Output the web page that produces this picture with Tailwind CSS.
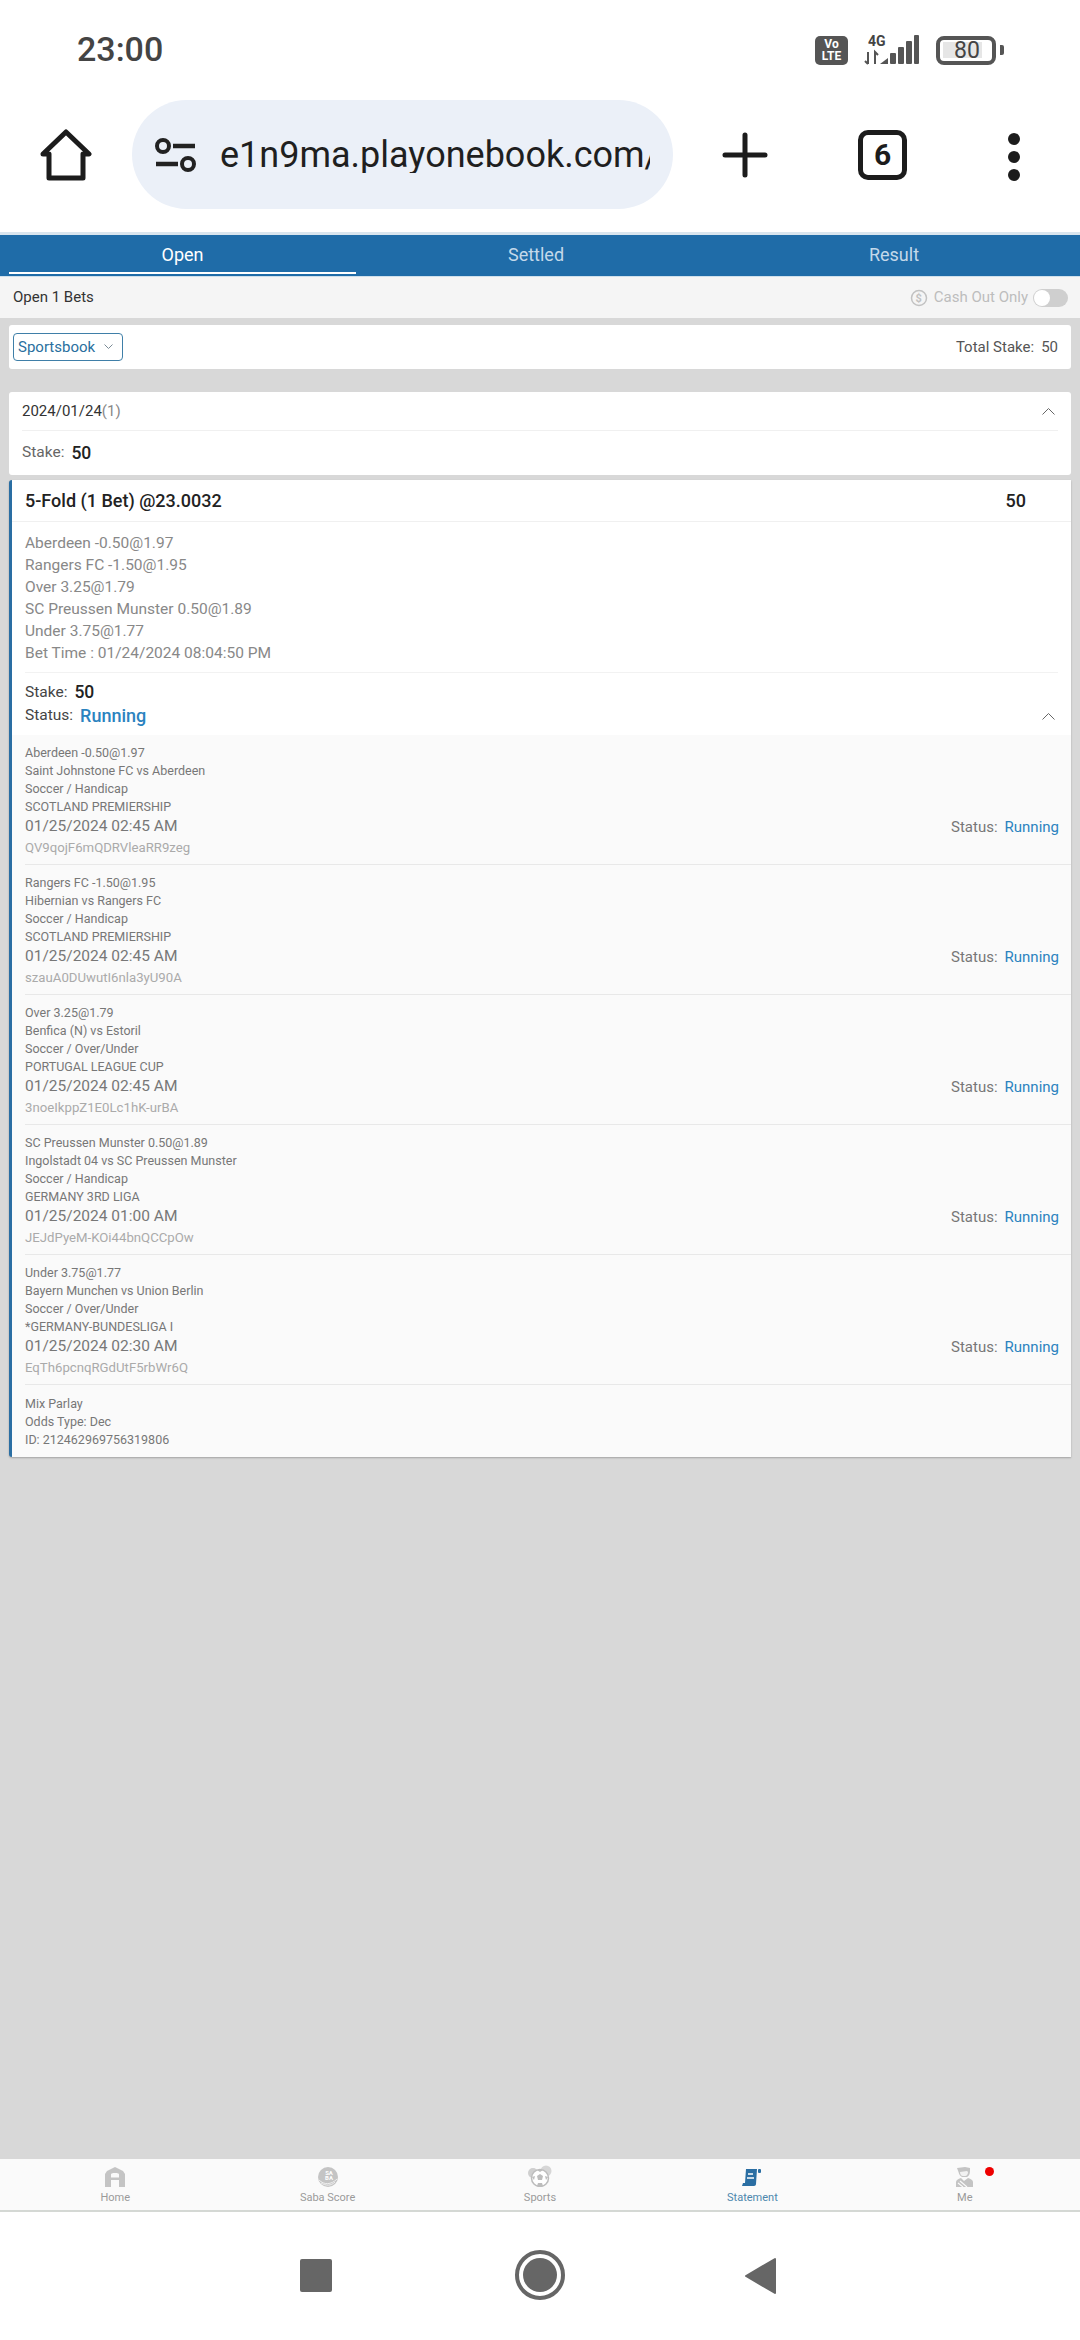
<!DOCTYPE html>
<html lang="en">
<head>
  <meta charset="UTF-8" />
  <meta name="viewport" content="width=device-width, initial-scale=1" />
  <title>Statement</title>
  <script src="https://cdn.jsdelivr.net/npm/@tailwindcss/browser@4"></script>
</head>
<body class="w-[1080px] h-[2340px] overflow-hidden bg-white font-['Roboto',sans-serif] flex flex-col">

  <!-- Android status bar -->
  <div class="h-[100px] shrink-0 flex items-center justify-between pl-[77px] pr-[76px]">
    <span class="text-[34px] leading-none font-medium text-[#444] pb-[3px]">23:00</span>
    <div class="flex items-center gap-[14px]">
      <div class="w-[33px] h-[29px] rounded-[5px] bg-[#555] text-white text-[12px] leading-[12px] font-bold text-center flex flex-col justify-center"><span>Vo</span><span>LTE</span></div>
      <svg width="58" height="30" viewBox="0 0 58 30" fill="#555">
        <text x="6" y="11" font-family="Roboto" font-size="14" font-weight="700" fill="#444">4G</text>
        <path d="M6 17v12M3 26l3 3M13 29V17l3 3" stroke="#555" stroke-width="2" fill="none"/>
        <path d="M18 29l8-6v6z"/><rect x="28" y="18" width="6" height="11" rx="1"/><rect x="36" y="12" width="6" height="17" rx="1"/><rect x="44" y="6" width="6" height="23" rx="1"/><rect x="52" y="0" width="5" height="29" rx="1"/>
      </svg>
      <div class="flex items-center gap-[4px] ml-[2px]">
        <div class="w-[60px] h-[29px] rounded-[8px] border-[4px] border-[#555] flex items-center px-[3px]">
          <div class="w-[39px] h-[16px] bg-[#e6e6e6] flex items-center justify-center pl-[9px] text-[23px] leading-none text-[#444]">80</div>
        </div>
        <div class="w-[4px] h-[10px] rounded-r-[2px] bg-[#555]"></div>
      </div>
    </div>
  </div>

  <!-- Browser toolbar -->
  <div class="h-[132px] shrink-0 flex items-start relative">
    <svg class="mt-[29px] ml-[40px] shrink-0" width="52" height="52" viewBox="0 0 52 52" fill="none" stroke="#1c1c1c" stroke-width="5" stroke-linejoin="round" stroke-linecap="round">
      <path d="M3 25L26 3l23 22h-6v24H9V25z"/>
    </svg>
    <div class="ml-[40px] w-[541px] h-[109px] rounded-[55px] bg-[#ebf0f8] flex items-center pl-[23px] pr-[23px] shrink-0">
      <svg class="shrink-0" width="42" height="34" viewBox="0 0 42 34" fill="none" stroke="#222" stroke-width="4">
        <circle cx="8" cy="8" r="6"/><path d="M18 8h22M1 26h22" stroke-width="4.5"/><circle cx="33" cy="26" r="6"/>
      </svg>
      <div class="ml-[23px] flex-1 overflow-hidden whitespace-nowrap text-[36px] leading-none text-[#1f1f1f]">e1n9ma.playonebook.com/</div>
    </div>
    <svg class="absolute left-[722px] top-[32px]" width="46" height="46" viewBox="0 0 46 46" stroke="#1c1c1c" stroke-width="5" stroke-linecap="round"><path d="M23 3v40M3 23h40"/></svg>
    <div class="absolute left-[858px] top-[30px] w-[49px] h-[50px] rounded-[10px] border-[5px] border-[#1c1c1c] flex items-center justify-center text-[30px] leading-none font-bold text-[#1c1c1c]">6</div>
    <div class="absolute left-[1008px] top-[33px] flex flex-col gap-[6px]">
      <span class="w-[12px] h-[12px] rounded-full bg-[#1c1c1c]"></span><span class="w-[12px] h-[12px] rounded-full bg-[#1c1c1c]"></span><span class="w-[12px] h-[12px] rounded-full bg-[#1c1c1c]"></span>
    </div>
  </div>
  <div class="h-[3px] shrink-0 bg-[#d9e5ee]"></div>

  <!-- Page -->
  <main class="flex-1 bg-[#d8d8d8] flex flex-col min-h-0">
    <div class="h-[42px] shrink-0 bg-[#1f6ca8] grid grid-cols-[347px_360px_356px] pl-[9px] text-[18px] border-b border-[#cfe0ec]">
      <div class="relative text-white flex items-center justify-center pb-[3px]">Open<span class="absolute left-0 right-0 bottom-[2px] h-[2px] bg-white"></span></div>
      <div class="text-[#c4d9ea] flex items-center justify-center pb-[3px]">Settled</div>
      <div class="text-[#c4d9ea] flex items-center justify-center pb-[3px]">Result</div>
    </div>

    <div class="h-[41px] shrink-0 bg-[#f5f5f5] flex items-center justify-between pl-[13px] pr-[12px] text-[15px] text-[#333]">
      <span>Open 1 Bets</span>
      <div class="flex items-center text-[#bdbdbd]">
        <svg class="mr-[6px]" width="18" height="20" viewBox="0 0 18 20" fill="none" stroke="#c2c2c2" stroke-width="1.5"><circle cx="9" cy="10" r="7.5"/><text x="5.5" y="14" font-family="Roboto" font-size="11" font-weight="700" fill="#c2c2c2" stroke="none">$</text></svg>
        <span>Cash Out Only</span>
        <div class="ml-[5px] w-[35px] h-[18px] rounded-full bg-[#cfcfcf] relative"><span class="absolute left-[1px] top-[1px] w-[16px] h-[16px] rounded-full bg-white"></span></div>
      </div>
    </div>

    <div class="mt-[7px] mx-[9px] h-[44px] shrink-0 bg-white rounded-[3px] flex items-center justify-between pl-[4px] pr-[13px] text-[15px]">
      <div class="w-[110px] h-[28px] rounded-[4px] border border-[#3f7fa8] text-[#2a6f9e] flex items-center pl-[4px] gap-[9px]">
        <span>Sportsbook</span>
        <svg width="9" height="6" viewBox="0 0 9 6" fill="none" stroke="#7a8a95"><path d="M.5.5l4 4 4-4"/></svg>
      </div>
      <div class="text-[#555]">Total Stake:<span class="ml-[7px]">50</span></div>
    </div>

    <div class="mt-[23px] mx-[9px] h-[83px] shrink-0 bg-white rounded-[3px] px-[13px]">
      <div class="h-[39px] border-b border-[#f0f0f0] flex items-center justify-between text-[15px] text-[#333]">
        <span>2024/01/24<span class="text-[#888]">(1)</span></span>
        <svg class="mr-[3px]" width="13" height="8" viewBox="0 0 13 8" fill="none" stroke="#666"><path d="M.5 7.5l6-6 6 6"/></svg>
      </div>
      <div class="h-[44px] flex items-center text-[15.5px] text-[#666]">Stake:<span class="ml-[7px] text-[17.5px] font-medium text-[#222]">50</span></div>
    </div>

    <!-- Bet card -->
    <section class="mt-[5px] mx-[9px] h-[977px] shrink-0 bg-white rounded-l-[3px] border-l-[3px] border-[#2a6ea3] shadow-[0_1px_2px_rgba(0,0,0,0.25)] flex flex-col">
      <div class="h-[42px] shrink-0 flex items-center justify-between pl-[13px] pr-[45px] border-b border-[#f0f0f0] text-[18px] font-medium text-[#222]">
        <span>5-Fold (1 Bet) @23.0032</span><span>50</span>
      </div>
      <div class="mx-[13px] h-[151px] shrink-0 pt-[10px] text-[15.5px] leading-[22px] text-[#888] border-b border-[#f2f2f2]">
        <p>Aberdeen -0.50@1.97</p>
        <p>Rangers FC -1.50@1.95</p>
        <p>Over 3.25@1.79</p>
        <p>SC Preussen Munster 0.50@1.89</p>
        <p>Under 3.75@1.77</p>
        <p>Bet Time : 01/24/2024 08:04:50 PM</p>
      </div>
      <div class="h-[62px] shrink-0 pl-[13px] pr-[13px] pt-[8px] text-[15.5px] text-[#444]">
        <div class="h-[23px] flex items-center">Stake:<span class="ml-[7px] text-[17.5px] font-medium text-[#222]">50</span></div>
        <div class="h-[23px] flex items-center justify-between">
          <div class="flex items-center">Status:<span class="ml-[7px] text-[18px] font-medium text-[#2b83bf]">Running</span></div>
          <svg class="mr-[3px]" width="13" height="8" viewBox="0 0 13 8" fill="none" stroke="#666"><path d="M.5 7.5l6-6 6 6"/></svg>
        </div>
      </div>

      <div class="flex-1 bg-[#fafafa] pl-[13px]">
        <article class="h-[130px] pt-[9px] border-b border-[#e8e8e8]">
          <div class="text-[12.5px] leading-[18px] text-[#777]"><p>Aberdeen -0.50@1.97</p><p>Saint Johnstone FC vs Aberdeen</p><p>Soccer / Handicap</p><p>SCOTLAND PREMIERSHIP</p></div>
          <div class="flex items-center justify-between pr-[12px] h-[22px] text-[15.5px] text-[#777]"><span>01/25/2024 02:45 AM</span><span class="text-[15px]">Status:<span class="ml-[7px] text-[#2b83bf]">Running</span></span></div>
          <p class="text-[13.2px] leading-[20px] text-[#aaa]">QV9qojF6mQDRVleaRR9zeg</p>
        </article>
        <article class="h-[130px] pt-[9px] border-b border-[#e8e8e8]">
          <div class="text-[12.5px] leading-[18px] text-[#777]"><p>Rangers FC -1.50@1.95</p><p>Hibernian vs Rangers FC</p><p>Soccer / Handicap</p><p>SCOTLAND PREMIERSHIP</p></div>
          <div class="flex items-center justify-between pr-[12px] h-[22px] text-[15.5px] text-[#777]"><span>01/25/2024 02:45 AM</span><span class="text-[15px]">Status:<span class="ml-[7px] text-[#2b83bf]">Running</span></span></div>
          <p class="text-[13.2px] leading-[20px] text-[#aaa]">szauA0DUwutI6nla3yU90A</p>
        </article>
        <article class="h-[130px] pt-[9px] border-b border-[#e8e8e8]">
          <div class="text-[12.5px] leading-[18px] text-[#777]"><p>Over 3.25@1.79</p><p>Benfica (N) vs Estoril</p><p>Soccer / Over/Under</p><p>PORTUGAL LEAGUE CUP</p></div>
          <div class="flex items-center justify-between pr-[12px] h-[22px] text-[15.5px] text-[#777]"><span>01/25/2024 02:45 AM</span><span class="text-[15px]">Status:<span class="ml-[7px] text-[#2b83bf]">Running</span></span></div>
          <p class="text-[13.2px] leading-[20px] text-[#aaa]">3noeIkppZ1E0Lc1hK-urBA</p>
        </article>
        <article class="h-[130px] pt-[9px] border-b border-[#e8e8e8]">
          <div class="text-[12.5px] leading-[18px] text-[#777]"><p>SC Preussen Munster 0.50@1.89</p><p>Ingolstadt 04 vs SC Preussen Munster</p><p>Soccer / Handicap</p><p>GERMANY 3RD LIGA</p></div>
          <div class="flex items-center justify-between pr-[12px] h-[22px] text-[15.5px] text-[#777]"><span>01/25/2024 01:00 AM</span><span class="text-[15px]">Status:<span class="ml-[7px] text-[#2b83bf]">Running</span></span></div>
          <p class="text-[13.2px] leading-[20px] text-[#aaa]">JEJdPyeM-KOi44bnQCCpOw</p>
        </article>
        <article class="h-[130px] pt-[9px] border-b border-[#e8e8e8]">
          <div class="text-[12.5px] leading-[18px] text-[#777]"><p>Under 3.75@1.77</p><p>Bayern Munchen vs Union Berlin</p><p>Soccer / Over/Under</p><p>*GERMANY-BUNDESLIGA I</p></div>
          <div class="flex items-center justify-between pr-[12px] h-[22px] text-[15.5px] text-[#777]"><span>01/25/2024 02:30 AM</span><span class="text-[15px]">Status:<span class="ml-[7px] text-[#2b83bf]">Running</span></span></div>
          <p class="text-[13.2px] leading-[20px] text-[#aaa]">EqTh6pcnqRGdUtF5rbWr6Q</p>
        </article>
        <div class="pt-[10px] text-[12.5px] leading-[18px] text-[#777]"><p>Mix Parlay</p><p>Odds Type: Dec</p><p>ID: 212462969756319806</p></div>
      </div>
    </section>
  </main>

  <!-- Bottom tabs -->
  <nav class="h-[53px] shrink-0 bg-[#fafafa] border-b-[2px] border-[#d4d8d4] grid grid-cols-5 px-[9px] text-[11px] leading-[14px] text-[#9a9a9a]">
    <div class="flex flex-col items-center pt-[8px]">
      <svg width="20" height="20" viewBox="0 0 20 20" fill="#c4c4c4" fill-rule="evenodd"><path d="M10 0l8 4 2 3v13h-6v-7H6v7H0V7l2-3zM6 7.500v3h8v-3c0-1-1-1.500-4-1.500s-4 .5-4 1.500z"/></svg>
      <span class="mt-[4px]">Home</span>
    </div>
    <div class="flex flex-col items-center pt-[8px]">
      <svg width="20" height="20" viewBox="0 0 20 20"><circle cx="10" cy="10" r="10" fill="#c4c4c4"/><path d="M1 13c5 5 12 5 18-1M3 16c5 3 10 3 14-1" stroke="#eee" fill="none"/><text x="11" y="8" font-family="Roboto" font-size="6" font-weight="700" fill="#fff" text-anchor="middle">SA</text><text x="11" y="13" font-family="Roboto" font-size="6" font-weight="700" fill="#fff" text-anchor="middle">BA</text></svg>
      <span class="mt-[4px]">Saba Score</span>
    </div>
    <div class="flex flex-col items-center pt-[6px]">
      <svg width="24" height="22" viewBox="0 0 24 22"><circle cx="5" cy="8" r="5" fill="#cfcfcf"/><circle cx="18" cy="6" r="5.500" fill="#d6d6d6"/><circle cx="12" cy="13" r="8.500" fill="#fff" stroke="#bdbdbd" stroke-width="1.500"/><path d="M9 11l3-2 3 2-1 4h-4zM9 5h6l-3 2zM4 12l3-1-1 4zM20 12l-3-1 1 4zM9 21l1-3h4l1 3z" fill="#bdbdbd"/></svg>
      <span class="mt-[4px]">Sports</span>
    </div>
    <div class="flex flex-col items-center pt-[8px] text-[#4d87ad]">
      <svg width="20" height="20" viewBox="0 0 20 20" fill="#2a6ea3"><path d="M4 2h11l-1 15c0 1-1 2-2 2H0l1-3h2z"/><rect x="16" y="2" width="3" height="4" rx="1"/><path d="M6 7h5M5 11h7" stroke="#fff" stroke-width="1.500"/></svg>
      <span class="mt-[4px]">Statement</span>
    </div>
    <div class="flex flex-col items-center pt-[8px] relative">
      <svg width="17" height="20" viewBox="0 0 17 20" fill="#c4c4c4"><path d="M1 1l8-1 5 1v3c0 3-1 5-3 6H6C4 9 3 7 2.500 5z"/><path d="M4 5l7-1 1 1c0 2-1 4-3 4H7C5 9 4 7 4 5z" fill="#f2f2f2"/><path d="M0 20v-5c0-2 2-3 5-4l3 3 4-3c3 1 5 2 5 4v5z"/><path d="M4 14l7 6M2 16l5 4" stroke="#fafafa" stroke-width="1.200"/></svg>
      <span class="mt-[4px]">Me</span>
      <span class="absolute left-[126px] top-[8px] w-[9px] h-[9px] rounded-full bg-[#ee0000]"></span>
    </div>
  </nav>

  <!-- Android nav bar -->
  <div class="h-[128px] shrink-0 bg-white flex items-center relative">
    <div class="absolute left-[300px] top-[47px] w-[32px] h-[33px] rounded-[2px] bg-[#666]"></div>
    <div class="absolute left-[515px] top-[38px] w-[50px] h-[50px] rounded-full border-[4px] border-[#666] flex items-center justify-center"><div class="w-[34px] h-[34px] rounded-full bg-[#666]"></div></div>
    <svg class="absolute left-[744px] top-[45px]" width="33" height="38" viewBox="0 0 33 38" fill="#666" stroke="#666" stroke-width="2" stroke-linejoin="round"><path d="M2 19L31 2v34z"/></svg>
  </div>
</body>
</html>
